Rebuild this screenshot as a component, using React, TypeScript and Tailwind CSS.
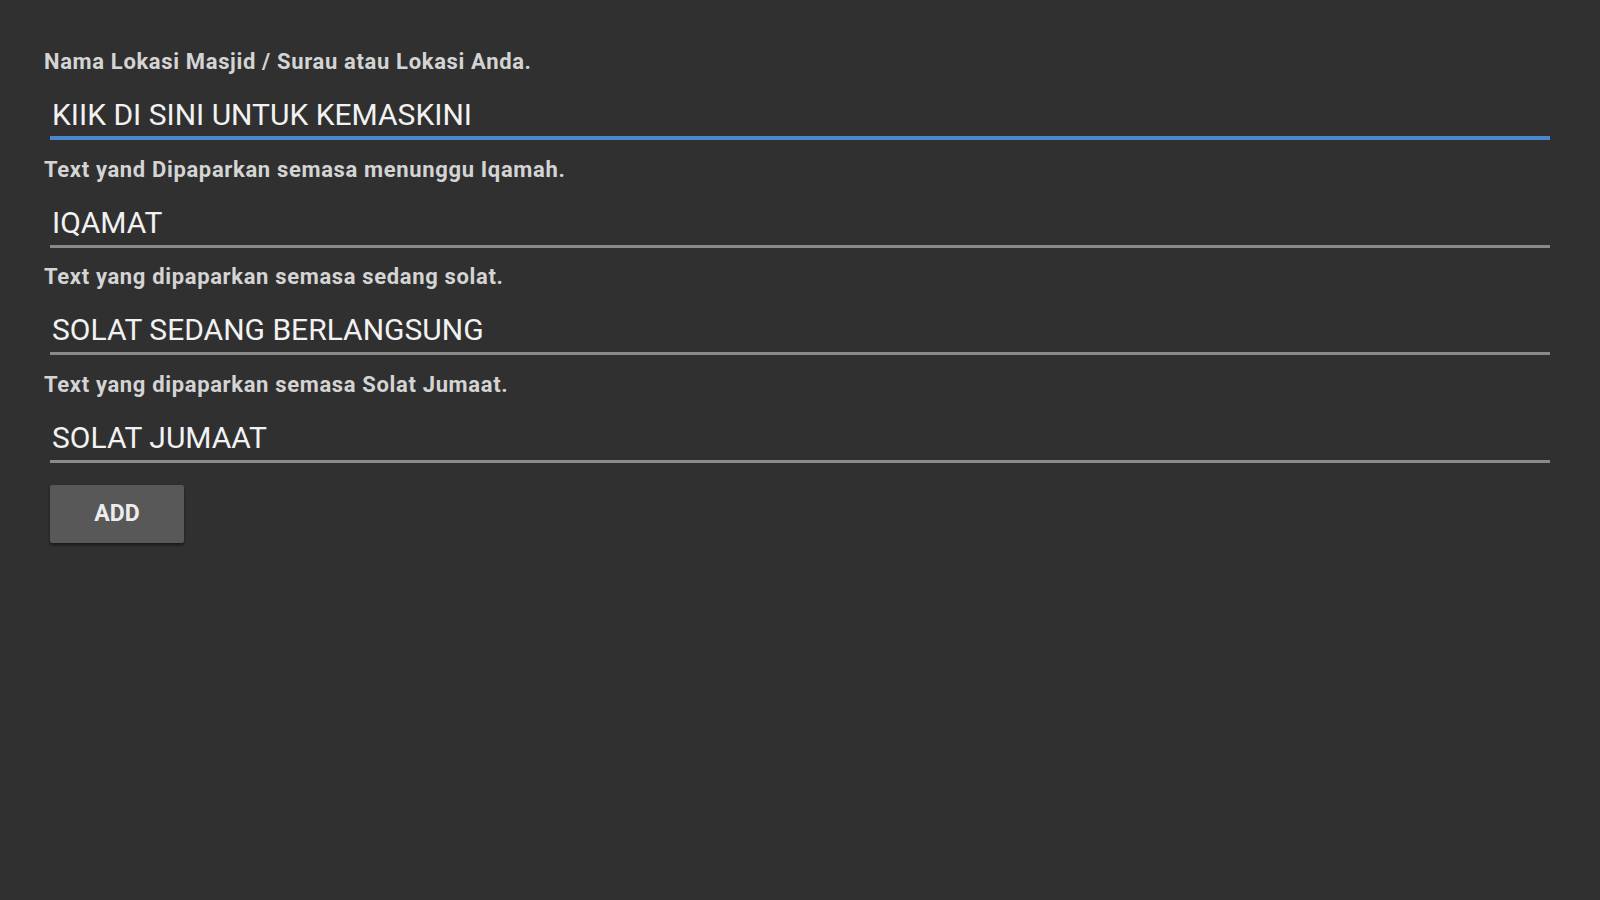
import React from "react";

const fields = [
  { label: "Nama Lokasi Masjid / Surau atau Lokasi Anda.", value: "KIIK DI SINI UNTUK KEMASKINI", active: true },
  { label: "Text yand Dipaparkan semasa menunggu Iqamah.", value: "IQAMAT", active: false },
  { label: "Text yang dipaparkan semasa sedang solat.", value: "SOLAT SEDANG BERLANGSUNG", active: false },
  { label: "Text yang dipaparkan semasa Solat Jumaat.", value: "SOLAT JUMAAT", active: false },
];

export default function App() {
  return (
    <div
      className="w-[1600px] h-[900px] bg-[#303030] pt-[50px] overflow-hidden flex flex-col"
      style={{ fontFamily: "Roboto, 'Noto Sans', sans-serif" }}
    >
      {fields.map((f, i) => (
        <div key={i} className="flex flex-col mb-[17.5px]">
          <div className="pl-[44px] text-[22px] leading-[24px] font-bold text-[#d4d4d4] tracking-[0.65px]">
            {f.label}
          </div>
          <div
            className={
              "mt-[22px] ml-[50px] mr-[50px] pl-[2px] pt-[2px] text-[30px] leading-[34px] text-[#f2f2f2] " +
              (f.active
                ? "h-[44px] border-b-[4px] border-[#4a88cf]"
                : "h-[44px] border-b-[3px] border-[#8a8a8a]")
            }
          >
            {f.value}
          </div>
        </div>
      ))}
      <div className="ml-[50px] mt-[5px]">
        <button className="w-[134px] h-[58px] bg-[#585858] rounded-[2px] shadow-[0_2px_3px_rgba(0,0,0,0.5)] text-[23px] font-bold text-[#ededed] flex items-center justify-center">
          ADD
        </button>
      </div>
    </div>
  );
}
